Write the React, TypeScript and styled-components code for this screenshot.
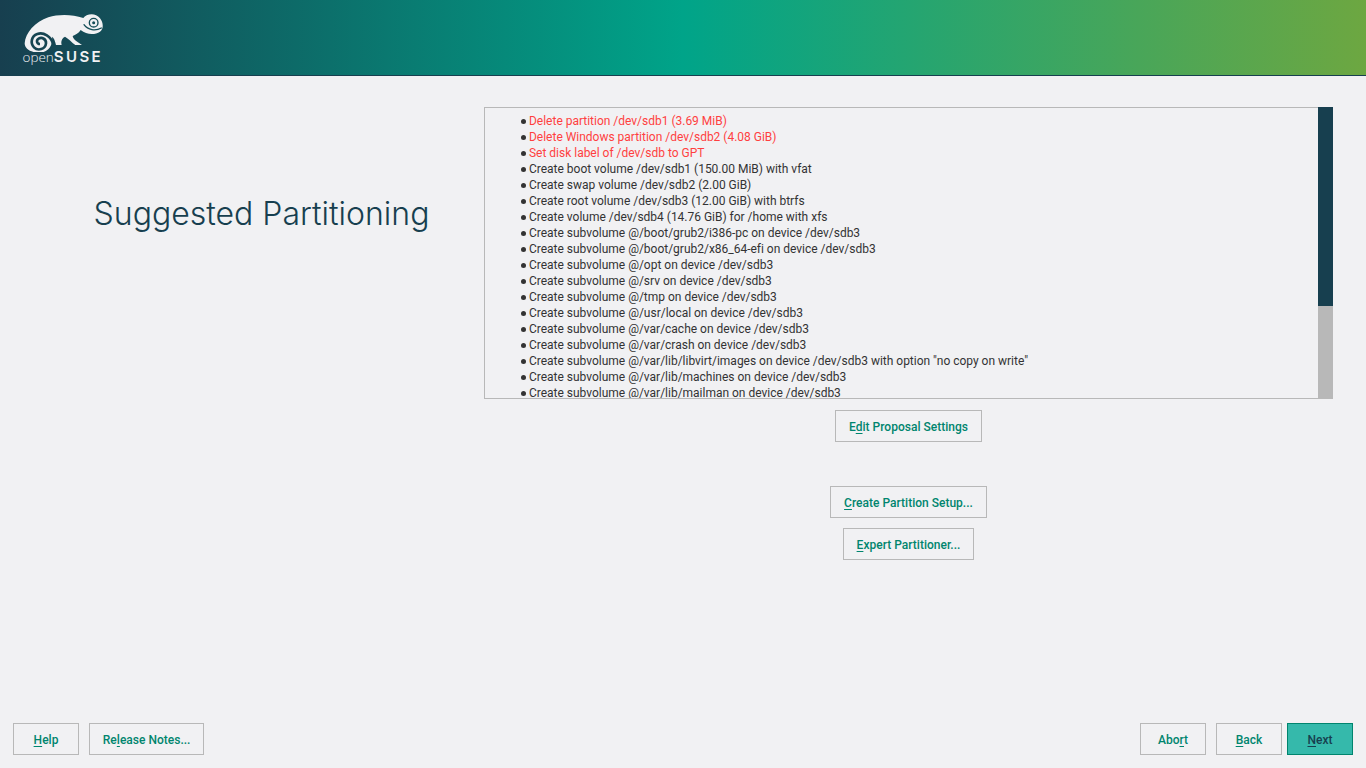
import React from "react";
import styled, { createGlobalStyle } from "styled-components";

const GlobalStyle = createGlobalStyle`
  html, body { margin: 0; padding: 0; height: 100%; }
  body {
    background: #f1f1f3;
    color: #333333;
    font-family: Roboto, "Liberation Sans", sans-serif;
    font-size: 12px;
    overflow: hidden;
  }
`;

const Page = styled.div`
  display: flex;
  flex-direction: column;
  height: 768px;
`;

const Banner = styled.header`
  box-sizing: border-box;
  height: 76px;
  flex: none;
  padding: 10px 0 0 20px;
  background: linear-gradient(90deg, #173f4f 0%, #00a489 50%, #6da741 100%);
  border-bottom: 1px solid #173f4f;
`;

const Logo = styled.div`
  display: flex;
  flex-direction: column;
  width: 90px;
`;

const LogoMark = styled.svg`
  display: block;
  width: 90px;
  height: 42px;
`;

const LogoText = styled.div`
  margin: -3px 0 0 2.5px;
  display: flex;
  align-items: baseline;
  color: #f1f1f3;
  font-family: "Open Sans", sans-serif;
  line-height: 16px;
`;

const LogoOpen = styled.span`
  font-size: 13.5px;
  font-weight: 300;
`;

const LogoSuse = styled.span`
  font-family: Inter, sans-serif;
  font-size: 15px;
  font-weight: 600;
  letter-spacing: 2.4px;
`;

const Body = styled.main`
  flex: 1;
  display: flex;
  padding: 31px 33px 0 39px;
`;

const Side = styled.div`
  box-sizing: border-box;
  width: 445px;
  flex: none;
  padding-top: 85px;
  text-align: center;
`;

const Title = styled.h1`
  margin: 0;
  color: #173f4f;
  font-family: Inter, sans-serif;
  font-size: 32px;
  font-weight: 300;
  line-height: 44px;
`;

const Content = styled.section`
  flex: 1;
  display: flex;
  flex-direction: column;
  align-items: center;
`;

const ProposalBox = styled.div`
  box-sizing: border-box;
  align-self: stretch;
  height: 292px;
  display: flex;
  border: 1px solid #b8b8b8;
  border-right: 0;
`;

const ProposalList = styled.ul`
  flex: 1;
  margin: 0;
  padding: 5px 0 0 36px;
  overflow: hidden;
  list-style: none;
  letter-spacing: -0.012px;
`;

const ProposalItem = styled.li<{ $danger?: boolean }>`
  display: flex;
  align-items: center;
  height: 16px;
  line-height: 16px;
  white-space: nowrap;
  color: ${(p) => (p.$danger ? "#ff3f3f" : "#333333")};

  &::before {
    content: "";
    flex: none;
    width: 5px;
    height: 5px;
    margin-right: 3px;
    border-radius: 50%;
    background: #333333;
  }
`;

const ScrollTrack = styled.div`
  width: 15px;
  flex: none;
  margin: -1px 0;
  background: #b8b8b8;
`;

const ScrollThumb = styled.div`
  background: #173f4f;
`;

const Button = styled.button<{ $primary?: boolean }>`
  box-sizing: border-box;
  height: 32px;
  padding: 2px 12.8px 0;
  border: 1px solid ${(p) => (p.$primary ? "#00856e" : "#b8b8b8")};
  background: ${(p) => (p.$primary ? "#35b9ab" : "transparent")};
  color: ${(p) => (p.$primary ? "#173f4f" : "#00856e")};
  font-family: Roboto, sans-serif;
  font-size: 12px;
  font-weight: 500;
  letter-spacing: 0.01px;
  white-space: nowrap;
`;

const ActionButton = styled(Button)<{ $top: number }>`
  margin-top: ${(p) => p.$top}px;
`;

const FixedButton = styled(Button)`
  width: 66px;
  padding-left: 0;
  padding-right: 0;
`;

const Key = styled.span`
  text-decoration: underline;
  text-underline-offset: 2px;
`;

const Footer = styled.footer`
  flex: none;
  display: flex;
  justify-content: space-between;
  height: 32px;
  padding: 0 13px 13px;
`;

const FooterGroup = styled.div<{ $gap: number }>`
  display: flex;
  gap: ${(p) => p.$gap}px;
`;

const proposal: { text: string; danger?: boolean }[] = [
  { text: "Delete partition /dev/sdb1 (3.69 MiB)", danger: true },
  { text: "Delete Windows partition /dev/sdb2 (4.08 GiB)", danger: true },
  { text: "Set disk label of /dev/sdb to GPT", danger: true },
  { text: "Create boot volume /dev/sdb1 (150.00 MiB) with vfat" },
  { text: "Create swap volume /dev/sdb2 (2.00 GiB)" },
  { text: "Create root volume /dev/sdb3 (12.00 GiB) with btrfs" },
  { text: "Create volume /dev/sdb4 (14.76 GiB) for /home with xfs" },
  { text: "Create subvolume @/boot/grub2/i386-pc on device /dev/sdb3" },
  { text: "Create subvolume @/boot/grub2/x86_64-efi on device /dev/sdb3" },
  { text: "Create subvolume @/opt on device /dev/sdb3" },
  { text: "Create subvolume @/srv on device /dev/sdb3" },
  { text: "Create subvolume @/tmp on device /dev/sdb3" },
  { text: "Create subvolume @/usr/local on device /dev/sdb3" },
  { text: "Create subvolume @/var/cache on device /dev/sdb3" },
  { text: "Create subvolume @/var/crash on device /dev/sdb3" },
  { text: 'Create subvolume @/var/lib/libvirt/images on device /dev/sdb3 with option "no copy on write"' },
  { text: "Create subvolume @/var/lib/machines on device /dev/sdb3" },
  { text: "Create subvolume @/var/lib/mailman on device /dev/sdb3" },
];

// viewBox is the header pixels x3, with the origin at (20,10)
const Chameleon = () => (
  <LogoMark viewBox="0 0 270 126">
    <path
      fill="#f1f1f3"
      d="M14 100 C16 70 45 35 85 22 C115 12 155 12 190 24 C198 12 226 6 240 25 C250 38 252 55 240 65 C225 75 200 75 182 60 C176 70 166 75 158 78 C160 90 175 97 186 105 L166 105 C155 97 145 85 135 80 C125 85 122 95 125 105 L108 105 C105 92 102 84 96 80 C100 108 82 128 58 128 C34 128 14 118 14 100 Z"
    />
    <path
      fill="none"
      stroke="#164552"
      strokeWidth="8"
      d="M100 104 C94 78 70 66 52 72 C34 78 30 100 42 112 C54 124 76 118 78 100 C79 88 66 80 56 86 C48 91 50 102 60 102"
    />
    <circle cx="221" cy="38" r="13" fill="#f1f1f3" stroke="#144d57" strokeWidth="4" />
    <circle cx="221" cy="38" r="4.5" fill="#144d57" />
    <path fill="none" stroke="#144d57" strokeWidth="4" strokeLinecap="round" d="M192 44 C204 60 226 64 244 54" />
  </LogoMark>
);

const App = () => (
  <Page>
    <GlobalStyle />
    <Banner>
      <Logo>
        <Chameleon />
        <LogoText>
          <LogoOpen>open</LogoOpen>
          <LogoSuse>SUSE</LogoSuse>
        </LogoText>
      </Logo>
    </Banner>
    <Body>
      <Side>
        <Title>Suggested Partitioning</Title>
      </Side>
      <Content>
        <ProposalBox>
          <ProposalList>
            {proposal.map((item) => (
              <ProposalItem key={item.text} $danger={item.danger}>
                {item.text}
              </ProposalItem>
            ))}
          </ProposalList>
          <ScrollTrack>
            <ScrollThumb style={{ height: `${(199 / 292) * 100}%` }} />
          </ScrollTrack>
        </ProposalBox>
        <ActionButton $top={11}>
          E<Key>d</Key>it Proposal Settings
        </ActionButton>
        <ActionButton $top={44}>
          <Key>C</Key>reate Partition Setup...
        </ActionButton>
        <ActionButton $top={10}>
          <Key>E</Key>xpert Partitioner...
        </ActionButton>
      </Content>
    </Body>
    <Footer>
      <FooterGroup $gap={10}>
        <FixedButton>
          <Key>H</Key>elp
        </FixedButton>
        <Button>
          Re<Key>l</Key>ease Notes...
        </Button>
      </FooterGroup>
      <FooterGroup $gap={5}>
        <FooterGroup $gap={10}>
          <FixedButton>
            Abo<Key>r</Key>t
          </FixedButton>
          <FixedButton>
            <Key>B</Key>ack
          </FixedButton>
        </FooterGroup>
        <FixedButton $primary>
          <Key>N</Key>ext
        </FixedButton>
      </FooterGroup>
    </Footer>
  </Page>
);

export default App;
